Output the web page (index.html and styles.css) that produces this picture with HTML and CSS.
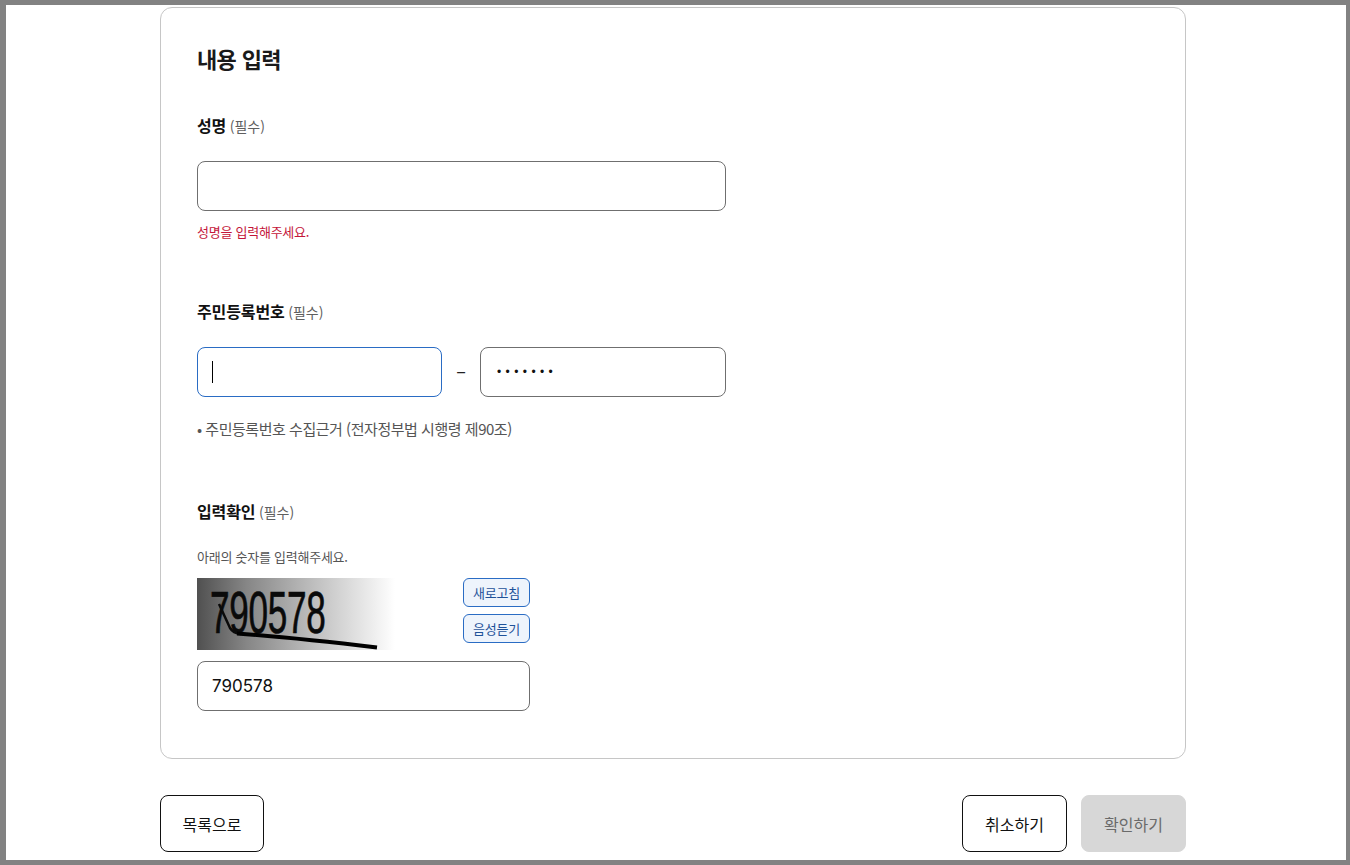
FILE: index.html
```html
<!DOCTYPE html>
<html lang="ko">
<head>
<meta charset="utf-8">
<title>내용 입력</title>
<link rel="stylesheet" href="styles.css">
</head>
<body>
<div class="frame">
  <main class="page">
    <section class="card">
      <h2 class="title">내용 입력</h2>

      <div class="group group-name">
        <div class="label"><strong>성명</strong> <span>(필수)</span></div>
        <input class="field field-wide" type="text">
        <p class="error">성명을 입력해주세요.</p>
      </div>

      <div class="group group-rrn">
        <div class="label"><strong>주민등록번호</strong> <span>(필수)</span></div>
        <div class="rrn-row">
          <div class="field field-rrn field-focus"><i class="caret"></i></div>
          <span class="dash">–</span>
          <input class="field field-rrn2 masked" type="password" value="1234567">
        </div>
        <p class="note">• 주민등록번호 수집근거 (전자정부법 시행령 제90조)</p>
      </div>

      <div class="group group-captcha">
        <div class="label"><strong>입력확인</strong> <span>(필수)</span></div>
        <p class="hint">아래의 숫자를 입력해주세요.</p>
        <div class="captcha-row">
          <div class="captcha">
            <span class="captcha-text">790578</span>
            <svg class="captcha-line" width="198" height="72" viewBox="0 0 198 72" aria-hidden="true">
              <path d="M22 26 L33 50 Q36 55 44 56" fill="none" stroke="#0a0a0a" stroke-width="2.5"/>
              <path d="M40 55.5 Q100 60 180 69.5" fill="none" stroke="#000" stroke-width="4"/>
            </svg>
          </div>
          <div class="captcha-btns">
            <button class="mini" type="button">새로고침</button>
            <button class="mini" type="button">음성듣기</button>
          </div>
        </div>
        <input class="field field-code" type="text" value="790578">
      </div>
    </section>

    <div class="actions">
      <button class="btn" type="button">목록으로</button>
      <div class="actions-right">
        <button class="btn btn-r" type="button">취소하기</button>
        <button class="btn btn-r btn-off" type="button">확인하기</button>
      </div>
    </div>
  </main>
</div>
</body>
</html>
```
FILE: styles.css
```css
* { box-sizing: border-box; }
html, body { margin: 0; padding: 0; height: 865px; overflow: hidden; background: #fff; }
body { font-family: "Noto Sans CJK KR", "Noto Sans", sans-serif; color: #111; }
.frame { height: 865px; border-style: solid; border-color: #828282; border-width: 5px 4px 5px 6px; overflow: hidden; background: #fff; }
.page { width: 1026px; margin-left: 154px; padding-top: 2px; }
.card { height: 752px; border: 1px solid #c6c6c6; border-radius: 12px; padding: 34px 36px 0; }
.title { margin: 0; font-size: 22px; font-weight: 700; line-height: 32px; letter-spacing: -0.65px; color: #1a1a1a; }
.group-name { margin-top: 39px; }
.group-rrn { margin-top: 57px; }
.group-captcha { margin-top: 59px; }
.label { line-height: 24px; font-size: 16px; }
.label strong { font-weight: 700; letter-spacing: -0.1px; }
.label span { font-size: 14px; color: #5f5f5f; letter-spacing: 0; margin-left: -1px; }
.field { display: block; height: 50px; border: 1px solid #6f6f6f; border-radius: 8px; background: #fff; padding: 0 14px; font: 400 17px "Inter", "Noto Sans CJK KR", sans-serif; color: #111; outline: none; }
.field-wide { width: 529px; margin-top: 23px; }
.error { margin: 11px 0 0; font-size: 13px; line-height: 20px; color: #c4163a; letter-spacing: -0.25px; }
.rrn-row { display: flex; align-items: center; margin-top: 23px; width: 529px; }
.field-rrn { width: 245px; display: flex; align-items: center; }
.field-focus { border-color: #2a6cc4; }
.caret { display: block; width: 1px; height: 22px; background: #000; }
.dash { width: 38px; padding-bottom: 4px; text-align: center; font-size: 18px; line-height: 20px; color: #222; }
.field-rrn2 { width: 246px; }
.masked { font-family: "Liberation Sans", sans-serif; font-size: 12px; letter-spacing: 4.4px; padding-left: 16px; }
.note { margin: 21px 0 0; font-size: 15px; line-height: 22px; color: #555; letter-spacing: -0.47px; }
.hint { margin: 23px 0 0; font-size: 13px; line-height: 20px; color: #555; letter-spacing: -0.25px; }
.captcha-row { display: flex; width: 333px; justify-content: space-between; margin-top: 11px; }
.captcha { position: relative; width: 198px; height: 72px; overflow: hidden; background: linear-gradient(90deg, #505050 0%, #868686 25%, #b0b0b0 50%, #d8d8d8 75%, #fff 100%); }
.captcha-text { position: absolute; left: 13px; top: 4px; font: 400 60px/62px "Liberation Sans", sans-serif; color: #0a0a0a; -webkit-text-stroke: 0.7px #0a0a0a; letter-spacing: -0.5px; transform: scaleX(0.585); transform-origin: left top; }
.captcha-line { position: absolute; left: 0; top: 0; }
.captcha-btns { display: flex; flex-direction: column; gap: 7px; }
.mini { width: 67px; height: 29px; padding: 0; border: 1px solid #2a6cc4; border-radius: 6px; background: #eef4fc; font: 400 13px "Noto Sans CJK KR", sans-serif; color: #1f5299; letter-spacing: -0.2px; }
.field-code { width: 333px; margin-top: 11px; }
.actions { display: flex; justify-content: space-between; margin-top: 36px; }
.actions-right { display: flex; gap: 14px; }
.btn { height: 57px; width: 104px; padding: 0; border: 1px solid #111; border-radius: 8px; background: #fff; font: 400 16px "Noto Sans CJK KR", sans-serif; color: #111; }
.btn-r { width: 105px; }
.btn-off { background: #d7d7d7; border-color: #d7d7d7; color: #6a6a6a; }
```
